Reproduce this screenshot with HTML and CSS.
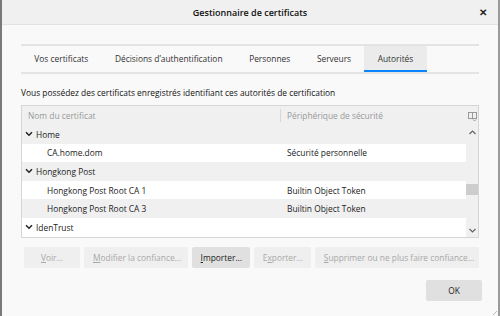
FILE: index.html
```html
<!DOCTYPE html>
<html lang="fr">
<head>
  <meta charset="UTF-8" />
  <title>Gestionnaire de certificats</title>
  <link rel="stylesheet" href="styles.css">
</head>
<body>
  <div class="window">
    <div class="titlebar">
      <span></span>
      <span class="title">Gestionnaire de certificats</span>
      <span class="close">&#x2715;</span>
    </div>

    <div class="content">
      <div class="tabs">
        <div class="tab">Vos certificats</div>
        <div class="tab">Décisions d’authentification</div>
        <div class="tab">Personnes</div>
        <div class="tab">Serveurs</div>
        <div class="tab selected">Autorités</div>
      </div>

      <p class="desc">Vous possédez des certificats enregistrés identifiant ces autorités de certification</p>

      <div class="tree">
        <div class="tree-head">
          <div class="col-name">Nom du certificat</div>
          <div class="col-dev">Périphérique de sécurité</div>
          <div class="picker">
            <svg width="9" height="9" viewBox="0 0 9 9"><rect x="0.5" y="0.5" width="8" height="6" fill="none" stroke="#999"/><line x1="4.5" y1="1" x2="4.5" y2="6" stroke="#999"/><path d="M5 7.5 L6.5 9 L8 7.5" fill="none" stroke="#999"/></svg>
          </div>
        </div>
        <div class="tree-main">
          <div class="rows">
            <div class="row alt">
              <div class="col-name group"><svg class="twisty" width="8" height="6" viewBox="0 0 8 6"><path d="M1 1.2 L4 4.2 L7 1.2" fill="none" stroke="#222" stroke-width="1.5"/></svg>Home</div>
              <div class="col-dev"></div>
            </div>
            <div class="row">
              <div class="col-name child">CA.home.dom</div>
              <div class="col-dev">Sécurité personnelle</div>
            </div>
            <div class="row alt">
              <div class="col-name group"><svg class="twisty" width="8" height="6" viewBox="0 0 8 6"><path d="M1 1.2 L4 4.2 L7 1.2" fill="none" stroke="#222" stroke-width="1.5"/></svg>Hongkong Post</div>
              <div class="col-dev"></div>
            </div>
            <div class="row">
              <div class="col-name child">Hongkong Post Root CA 1</div>
              <div class="col-dev">Builtin Object Token</div>
            </div>
            <div class="row alt">
              <div class="col-name child">Hongkong Post Root CA 3</div>
              <div class="col-dev">Builtin Object Token</div>
            </div>
            <div class="row">
              <div class="col-name group"><svg class="twisty" width="8" height="6" viewBox="0 0 8 6"><path d="M1 1.2 L4 4.2 L7 1.2" fill="none" stroke="#222" stroke-width="1.5"/></svg>IdenTrust</div>
              <div class="col-dev"></div>
            </div>
          </div>
          <div class="scrollbar">
            <div class="arrow"><svg width="7" height="5" viewBox="0 0 7 5"><path d="M0.5 4 L3.5 1 L6.5 4" fill="none" stroke="#666" stroke-width="1.2"/></svg></div>
            <div class="track"><div class="thumb"></div></div>
            <div class="arrow"><svg width="7" height="5" viewBox="0 0 7 5"><path d="M0.5 1 L3.5 4 L6.5 1" fill="none" stroke="#666" stroke-width="1.2"/></svg></div>
          </div>
        </div>
      </div>

      <div class="actions">
        <button disabled><u>V</u>oir…</button>
        <button disabled><u>M</u>odifier la confiance…</button>
        <button class="enabled"><u>I</u>mporter…</button>
        <button disabled>E<u>x</u>porter…</button>
        <button disabled><u>S</u>upprimer ou ne plus faire confiance…</button>
      </div>

      <div class="footer">
        <button class="ok">OK</button>
      </div>
    </div>
    <div class="grip"></div>
  </div>
</body>
</html>
```

FILE: styles.css
```css
* { box-sizing: border-box; }
body { margin: 0; font-family: "Open Sans", "Noto Sans", sans-serif; font-size: 8.4px; color: #222; background: #f9f9f9; }
.window { position: relative; width: 500px; height: 316px; background: #f9f9f9; border-left: 2px solid #7a7a7a; border-right: 2px solid #9a9a9a; }

.titlebar { display: grid; grid-template-columns: 1fr auto 1fr; align-items: center; height: 25px; background: #f0f0f0; border-bottom: 1px solid #e2e2e2; }
.title { font-weight: 600; font-size: 9px; color: #111; }
.close { justify-self: end; margin-right: 11px; font-size: 10px; font-weight: bold; color: #222; }

.content { padding: 19px 19px 0 19px; }

.tabs { display: flex; border-top: 2px solid #e4e4e4; border-bottom: 2px solid #e4e4e4; height: 30px; }
.tab { padding: 0 13.3px; line-height: 26px; color: #333; border-bottom: 2px solid transparent; white-space: nowrap; }
.tab.selected { background: #ebebeb; border-bottom-color: #0a84ff; }

.desc { margin: 12px 0 0 0; line-height: 13px; color: #111; }

.tree { margin-top: 6px; height: 133px; border: 1px solid #d6d6d6; background: #fff; display: flex; flex-direction: column; }
.tree-head { display: flex; height: 19px; align-items: center; background: #f0f0f0; color: #999; }
.tree-head .col-dev { flex: 1; border-left: 1px solid #d8d8d8; padding-left: 6px; line-height: 13px; }
.picker { width: 12px; display: flex; justify-content: center; padding-top: 1px; }
.tree-main { flex: 1; display: flex; }
.rows { flex: 1; }
.row { display: flex; height: 18.6px; align-items: center; }
.row.alt { background: #f0f0f0; }
.col-name { width: 258px; padding-left: 6px; white-space: nowrap; }
.col-dev { flex: 1; padding-left: 7px; }
.group { padding-left: 3px; display: flex; align-items: center; }
.twisty { margin-right: 3px; }
.child { padding-left: 25px; }

.scrollbar { width: 12px; background: #f0f0f0; display: flex; flex-direction: column; }
.arrow { height: 14px; display: flex; align-items: center; justify-content: center; }
.track { flex: 1; position: relative; }
.thumb { position: absolute; left: 0; right: 0; top: 45px; height: 11px; background: #cdcdcd; }

.actions { display: flex; gap: 4px; margin-top: 9px; padding-left: 3px; }
button { font-family: inherit; font-size: 8.4px; height: 21px; min-width: 56px; border: none; border-radius: 2px; background: #ededed; color: #222; padding: 0 9px; white-space: nowrap; }
button:disabled { color: #a8a8a8; background: #efefef; }
button.enabled { background: #e0e0e0; }
button.ok { width: 56px; background: #e0e0e0; }

.footer { display: flex; justify-content: flex-end; margin-top: 12px; margin-right: -3px; }
.grip { position: absolute; right: 1px; bottom: 1px; width: 6px; height: 6px; background: linear-gradient(135deg, transparent 60%, #bbb 60%, #bbb 70%, transparent 70%); }
```
